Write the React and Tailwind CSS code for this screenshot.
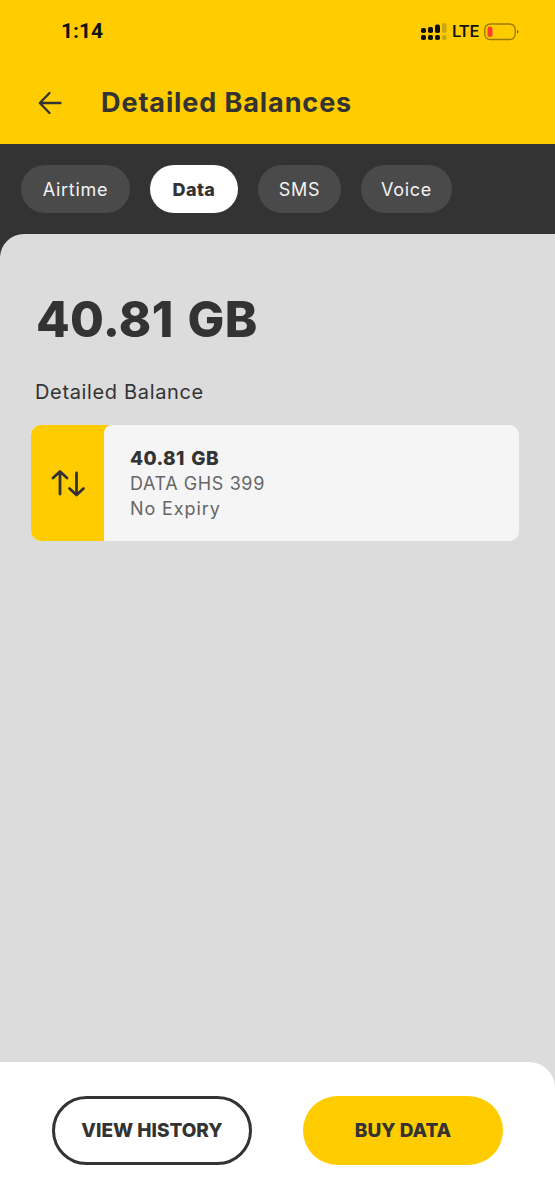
import React from "react";

function Signal() {
  return (
    <svg width="26" height="18" viewBox="0 0 26 18" className="block">
      <g fill="#111">
        <rect x="0" y="5" width="5" height="5" rx="1.800" />
        <rect x="0" y="12" width="5" height="5" rx="1.800" />
        <rect x="7" y="4" width="5" height="6" rx="1.800" />
        <rect x="7" y="12" width="5" height="5" rx="1.800" />
        <rect x="14" y="1.500" width="5" height="8.500" rx="1.800" />
        <rect x="14" y="12" width="5" height="5" rx="1.800" />
      </g>
      <rect x="21" y="0" width="4.500" height="10" rx="1.800" fill="#c9a80f" />
      <rect x="21" y="12" width="4.500" height="5" rx="1.800" fill="#c9a80f" />
    </svg>
  );
}

function Battery() {
  return (
    <svg width="35" height="18" viewBox="0 0 35 18" className="block">
      <rect x="0.750" y="1" width="30.500" height="15.500" rx="5.500" fill="none" stroke="#9a7b08" strokeWidth="1.400" />
      <rect x="3.500" y="3.500" width="5" height="10.500" rx="2.500" fill="#ff3b30" />
      <path d="M33 7v3.500c1-.3 1.500-1 1.500-1.700S34 7.300 33 7z" fill="#7d6608" />
    </svg>
  );
}

function Pill({ label, active, width }) {
  return (
    <div
      className={
        active
          ? "flex h-12 items-center justify-center rounded-[24px] bg-white text-[18px] font-extrabold tracking-[0.4px] text-[#333333]"
          : "flex h-12 items-center justify-center rounded-[24px] bg-[#4a4a4a] text-[18px] font-normal tracking-[0.7px] text-[#f2f2f2]"
      }
      style={{ width }}
    >
      {label}
    </div>
  );
}

export default function App() {
  return (
    <div className="flex h-[1200px] w-[555px] flex-col overflow-hidden bg-[#dcdcdc] font-['Inter','Open_Sans',sans-serif] text-[#333333]">
      <header className="h-[144px] shrink-0 bg-[#ffcc00]">
        <div className="flex h-[64px] items-center justify-between pl-[61px] pr-[36px]">
          <span className="font-['Roboto',sans-serif] text-[21px] font-bold text-[#111111]">1:14</span>
          <div className="flex items-center gap-[5px]">
            <Signal />
            <span className="font-['Roboto',sans-serif] text-[17px] font-medium text-[#111111]">LTE</span>
            <Battery />
          </div>
        </div>
        <div className="flex h-[77px] items-center pl-[38px]">
          <svg width="24" height="24" viewBox="0 0 24 24" fill="none" stroke="#333" strokeWidth="2.300" strokeLinecap="round" strokeLinejoin="round">
            <path d="M22.500 12H2M11.500 2 1.800 12l9.700 10" />
          </svg>
          <h1 className="ml-[39px] text-[27px] font-bold leading-none tracking-[0.9px]">Detailed Balances</h1>
        </div>
      </header>

      <div className="flex h-[112px] shrink-0 gap-[20px] bg-[#333333] pl-[21px] pt-[21px]">
        <Pill label="Airtime" width={109} />
        <Pill label="Data" active width={88} />
        <Pill label="SMS" width={83} />
        <Pill label="Voice" width={91} />
      </div>

      <main className="z-10 -mt-[22px] flex-1 rounded-tl-[24px] bg-[#dcdcdc] pt-[60px]">
        <p className="pl-[36px] text-[49px] font-extrabold leading-[52px] tracking-[0.3px] [word-spacing:3px]">40.81 GB</p>
        <p className="mt-[34px] pl-[35px] text-[20px] leading-[24px] tracking-[0.65px]">Detailed Balance</p>
        <section className="mx-[31px] mt-[21px] flex h-[116px] w-[488px] overflow-hidden rounded-[10px] bg-[#f5f5f5]">
          <div className="flex w-[81px] shrink-0 items-center justify-center bg-[#ffcc00] pr-[8px]">
            <svg width="36" height="28" viewBox="0 0 36 28" fill="none" stroke="#333" strokeWidth="2.800" strokeLinecap="round" strokeLinejoin="round">
              <path d="M10 25V3M3 9 10 2.500 17 9M26.500 4v22M19.500 19.500l7 6.500 7-6.500" />
            </svg>
          </div>
          <div className="z-10 -ml-[8px] flex flex-1 flex-col justify-center rounded-tl-[8px] bg-[#f5f5f5] pl-[26px] text-[18px] leading-[25px] tracking-[0.6px] text-[#666666]">
            <p className="text-[19px] font-extrabold tracking-[0.4px] text-[#333333] [word-spacing:2px]">40.81 GB</p>
            <p>DATA GHS 399</p>
            <p className="tracking-[0.9px]">No Expiry</p>
          </div>
        </section>
      </main>

      <footer className="z-10 flex h-[138px] shrink-0 gap-[51px] rounded-tr-[26px] bg-white pl-[52px] pt-[34px]">
        <button className="h-[69px] w-[200px] rounded-[35px] border-[3px] border-[#333333] pt-[2px] text-[19px] font-extrabold">VIEW HISTORY</button>
        <button className="h-[69px] w-[200px] rounded-[35px] bg-[#ffcc00] pt-[2px] text-[19px] font-extrabold">BUY DATA</button>
      </footer>
    </div>
  );
}
